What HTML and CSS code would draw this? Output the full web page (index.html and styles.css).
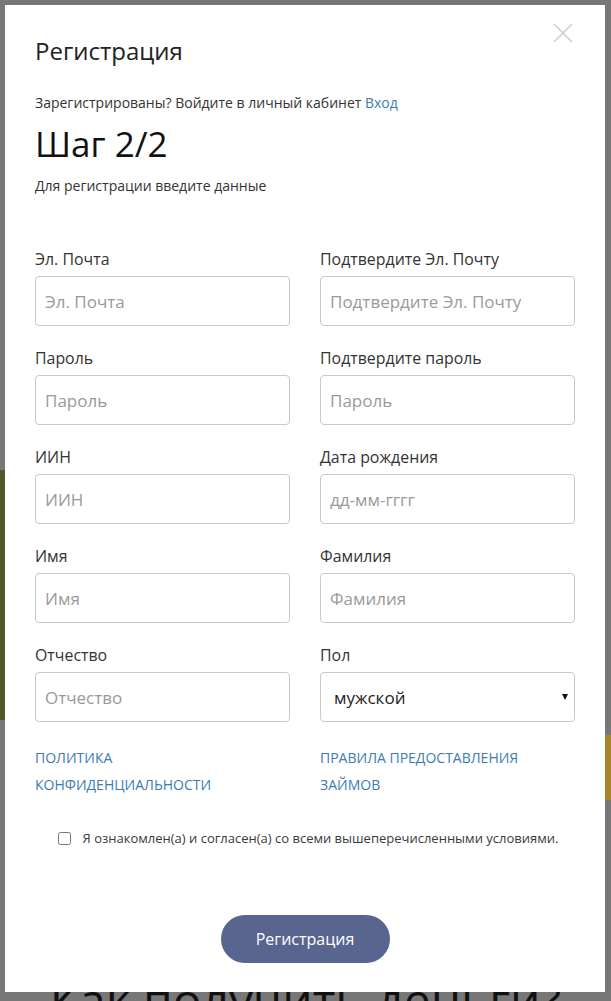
FILE: index.html
```html
<!DOCTYPE html>
<html lang="ru">
<head>
<meta charset="utf-8">
<title>Регистрация</title>
<link rel="stylesheet" href="styles.css">
</head>
<body>
<div class="backdrop">
  <h2 class="bg-heading">Как получить деньги?</h2>
</div>
<div class="modal">
  <button class="close" aria-label="Закрыть">
    <svg width="20" height="20" viewBox="0 0 20 20"><path d="M1 1L19 19M19 1L1 19" stroke="#cfcfcf" stroke-width="1.6" fill="none"/></svg>
  </button>
  <h1 class="title">Регистрация</h1>
  <p class="login">Зарегистрированы? Войдите в личный кабинет <a href="#" class="link">Вход</a></p>
  <div class="step">Шаг 2/2</div>
  <p class="hint">Для регистрации введите данные</p>
  <form class="form">
    <div class="grid">
      <label class="field"><span class="label">Эл. Почта</span><input class="input" type="text" placeholder="Эл. Почта"></label>
      <label class="field"><span class="label">Подтвердите Эл. Почту</span><input class="input" type="text" placeholder="Подтвердите Эл. Почту"></label>
      <label class="field"><span class="label">Пароль</span><input class="input" type="password" placeholder="Пароль"></label>
      <label class="field"><span class="label">Подтвердите пароль</span><input class="input" type="password" placeholder="Пароль"></label>
      <label class="field"><span class="label">ИИН</span><input class="input" type="text" placeholder="ИИН"></label>
      <label class="field"><span class="label">Дата рождения</span><input class="input" type="text" placeholder="дд-мм-гггг"></label>
      <label class="field"><span class="label">Имя</span><input class="input" type="text" placeholder="Имя"></label>
      <label class="field"><span class="label">Фамилия</span><input class="input" type="text" placeholder="Фамилия"></label>
      <label class="field"><span class="label">Отчество</span><input class="input" type="text" placeholder="Отчество"></label>
      <label class="field"><span class="label">Пол</span>
        <span class="select-wrap"><select class="input select"><option>мужской</option><option>женский</option></select></span>
      </label>
    </div>
    <div class="links">
      <a href="#" class="doc-link">Политика конфиденциальности</a>
      <a href="#" class="doc-link">Правила предоставления займов</a>
    </div>
    <label class="agree"><input type="checkbox" class="check"><span>Я ознакомлен(а) и согласен(а) со всеми вышеперечисленными условиями.</span></label>
    <div class="actions"><button type="button" class="submit">Регистрация</button></div>
  </form>
</div>
</body>
</html>
```
FILE: styles.css
```css
* { box-sizing: border-box; }
html, body { margin: 0; padding: 0; }
body {
  width: 611px;
  height: 1001px;
  overflow: hidden;
  position: relative;
  font-family: "Open Sans", "Noto Sans", sans-serif;
  color: #333;
  background-color: #777;
  background-image:
    linear-gradient(#4f5a2c, #4f5a2c),
    linear-gradient(#a8852c, #a8852c);
  background-repeat: no-repeat;
  background-size: 5px 250px, 6px 65px;
  background-position: 0 470px, 605px 735px;
}
.backdrop {
  height: 1001px;
  display: flex;
  flex-direction: column;
  justify-content: flex-end;
}
.bg-heading {
  margin: 0 0 -27px 0;
  font-size: 48px;
  line-height: 56px;
  font-weight: 400;
  color: #111;
  text-align: center;
  white-space: nowrap;
}
.modal {
  position: absolute;
  left: 5px;
  top: 5px;
  width: 600px;
  height: 987px;
  background: #fff;
  padding: 30px 30px;
}
.close {
  position: absolute;
  top: 18px;
  right: 32px;
  width: 20px;
  height: 20px;
  padding: 0;
  border: 0;
  background: none;
  display: flex;
}
.title {
  margin: 0;
  font-size: 24px;
  line-height: 32px;
  font-weight: 400;
  color: #222;
}
.login {
  margin: 26px 0 0;
  font-size: 14px;
  line-height: 20px;
  color: #333;
}
.link { color: #3d7bb0; text-decoration: none; }
.step {
  margin-top: 8px;
  font-size: 35px;
  line-height: 46px;
  color: #111;
}
.hint {
  margin: 9px 0 0;
  font-size: 14px;
  line-height: 20px;
  color: #333;
}
.form { margin-top: 52px; }
.grid {
  display: grid;
  grid-template-columns: 255px 255px;
  column-gap: 30px;
  row-gap: 21px;
}
.field { display: flex; flex-direction: column; }
.label {
  font-size: 15.9px;
  line-height: 22px;
  margin-bottom: 6px;
  color: #333;
}
.input {
  height: 50px;
  width: 100%;
  border: 1px solid #c9c9c9;
  border-radius: 4px;
  padding: 0 9px;
  font-family: inherit;
  font-size: 17px;
  color: #333;
  background: #fff;
  outline: none;
}
.input::placeholder { color: #9a9a9a; opacity: 1; }
.select-wrap { position: relative; display: block; }
.select {
  appearance: none;
  -webkit-appearance: none;
  padding-left: 13px;
  color: #222;
}
.select-wrap::after {
  content: "";
  position: absolute;
  right: 7px;
  top: 22px;
  border-left: 3.5px solid transparent;
  border-right: 3.5px solid transparent;
  border-top: 6px solid #111;
  pointer-events: none;
}
.links {
  margin-top: 22px;
  display: grid;
  grid-template-columns: 255px 255px;
  column-gap: 30px;
}
.doc-link {
  font-size: 14px;
  line-height: 27px;
  text-transform: uppercase;
  color: #3d7bb0;
  text-decoration: none;
}
.agree {
  margin-top: 30px;
  display: flex;
  align-items: center;
  justify-content: center;
  gap: 12px;
  font-size: 13px;
  line-height: 20px;
  color: #3a3a3a;
  padding-left: 6px;
}
.check {
  margin: 0;
  width: 13px;
  height: 13px;
}
.actions {
  margin-top: 67px;
  display: flex;
  justify-content: center;
}
.submit {
  width: 169px;
  height: 48px;
  border: 0;
  border-radius: 24px;
  background: #58668f;
  color: #fff;
  font-family: inherit;
  font-size: 16px;
}
```
